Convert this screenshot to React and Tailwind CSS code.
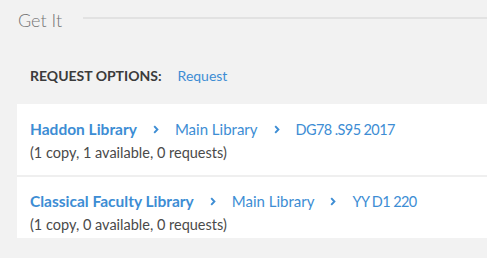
const holdings = [
  { library: 'Haddon Library', location: 'Main Library', callNo: 'DG78 .S95 2017', info: '(1 copy, 1 available, 0 requests)' },
  { library: 'Classical Faculty Library', location: 'Main Library', callNo: 'YY D1 220', info: '(1 copy, 0 available, 0 requests)' },
]

function Chevron() {
  return (
    <svg width="6" height="9" viewBox="0 0 6 9" className="mx-[16px] shrink-0">
      <path d="M1.2 1.2l3.2 3.3-3.2 3.3" fill="none" stroke="#3d8dd4" strokeWidth="1.9" />
    </svg>
  )
}

export default function App() {
  return (
    <div className="w-[487px] h-[258px] bg-[#f2f2f2] overflow-hidden font-['Lato',sans-serif]">
      <div className="flex items-center pl-[18px] pt-[8px]">
        <span className="text-[18px] font-light text-[#757575] leading-[24px]">Get It</span>
        <div className="flex-1 h-[2px] bg-[#e2e2e2] ml-[21px] mt-[-4px]" />
      </div>
      <div className="flex items-center pl-[30px] mt-[33px] text-[14px] leading-[22px]">
        <span className="font-bold text-[#3b3b3b]">REQUEST OPTIONS:</span>
        <span className="ml-[16px] text-[#3d8dd4]">Request</span>
      </div>
      <div className="ml-[17px] mt-[17px] bg-white">
        {holdings.map((h, i) => (
          <div key={h.library} className={`pl-[13px] ${i > 0 ? 'border-t-2 border-[#efefef] pt-[13px] pb-[2px]' : 'pt-[14px] pb-[11px]'}`}>
            <div className="flex items-center text-[15px] leading-[23px] text-[#3d8dd4]">
              <span className="font-bold text-[15.5px]">{h.library}</span>
              <Chevron />
              <span>{h.location}</span>
              <Chevron />
              <span className="text-[14.5px] tracking-[-0.6px]">{h.callNo}</span>
            </div>
            <div className="text-[14.5px] leading-[23px] text-[#4a4a4a]">{h.info}</div>
          </div>
        ))}
      </div>
    </div>
  )
}
